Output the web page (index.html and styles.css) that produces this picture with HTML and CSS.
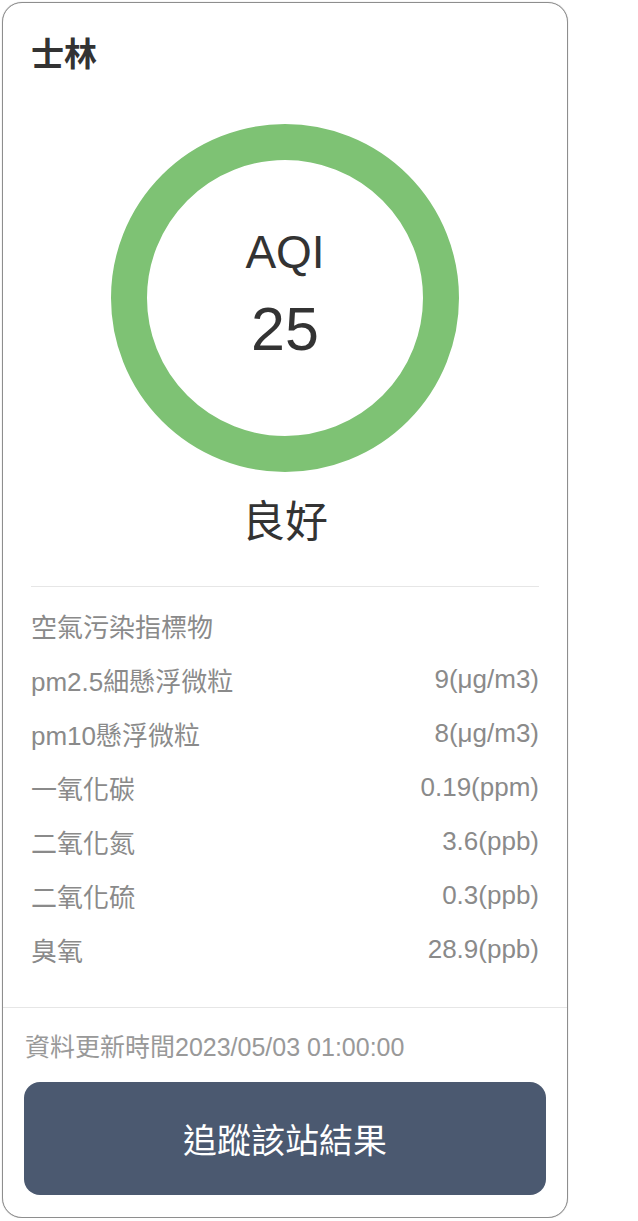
FILE: index.html
```html
<!DOCTYPE html>
<html lang="zh-Hant">
<head>
<meta charset="utf-8">
<title>士林 AQI</title>
<link rel="stylesheet" href="styles.css">
</head>
<body>
<div class="card">
  <div class="header"><h1 class="title">士林</h1></div>
  <div class="ring-wrap">
    <div class="ring">
      <div class="ring-label">AQI</div>
      <div class="ring-value">25</div>
    </div>
  </div>
  <div class="status">良好</div>
  <div class="pollutants">
    <div class="divider"></div>
    <div class="row"><span>空氣污染指標物</span></div>
    <div class="row"><span>pm2.5細懸浮微粒</span><span>9(μg/m3)</span></div>
    <div class="row"><span>pm10懸浮微粒</span><span>8(μg/m3)</span></div>
    <div class="row"><span>一氧化碳</span><span>0.19(ppm)</span></div>
    <div class="row"><span>二氧化氮</span><span>3.6(ppb)</span></div>
    <div class="row"><span>二氧化硫</span><span>0.3(ppb)</span></div>
    <div class="row"><span>臭氧</span><span>28.9(ppb)</span></div>
  </div>
  <div class="footer">
    <div class="updated">資料更新時間2023/05/03 01:00:00</div>
    <button class="track-btn">追蹤該站結果</button>
  </div>
</div>
</body>
</html>
```

FILE: styles.css
```css
html, body {
  margin: 0;
  padding: 0;
  background: #ffffff;
}
body {
  padding: 2px 0 0 2px;
  font-family: "Liberation Sans", "Noto Sans CJK TC", sans-serif;
}
.card {
  width: 566px;
  height: 1216px;
  box-sizing: border-box;
  border: 1px solid #8e8e8e;
  border-radius: 20px;
  box-shadow: 0 0 1px rgba(0, 0, 0, 0.35);
  background: #fff;
  display: flex;
  flex-direction: column;
  overflow: hidden;
}
.header {
  height: 121px;
  padding: 31px 28px 0;
  box-sizing: border-box;
}
.title {
  margin: 0;
  font-size: 33px;
  line-height: 42px;
  font-weight: 700;
  color: #333;
}
.ring-wrap {
  display: flex;
  justify-content: center;
}
.ring {
  width: 348px;
  height: 348px;
  box-sizing: border-box;
  border: 36px solid #7ec274;
  border-radius: 50%;
  display: flex;
  flex-direction: column;
  align-items: center;
  justify-content: center;
  color: #333;
}
.ring-label {
  font-size: 46px;
  line-height: 56px;
  margin-top: -8px;
}
.ring-value {
  font-size: 61px;
  line-height: 70px;
  margin-top: 14px;
}
.status {
  margin-top: 20px;
  height: 60px;
  line-height: 60px;
  text-align: center;
  font-size: 43px;
  color: #333;
}
.pollutants {
  padding: 34px 28px 29px;
}
.divider {
  height: 1px;
  background: #e6e6e6;
  margin-bottom: 11px;
}
.row {
  height: 54px;
  display: flex;
  justify-content: space-between;
  align-items: center;
  font-size: 26px;
  color: #8a8a8a;
}
.row:last-child {
  margin-bottom: 2px;
}
.footer {
  border-top: 1px solid #e6e6e6;
  padding: 22px 21px 0;
  display: flex;
  flex-direction: column;
}
.updated {
  font-size: 25px;
  line-height: 34px;
  color: #999;
  padding-left: 1px;
}
.track-btn {
  margin-top: 18px;
  height: 113px;
  border: none;
  border-radius: 16px;
  background: #4b5970;
  color: #fff;
  font-family: "Liberation Sans", "Noto Sans CJK TC", sans-serif;
  font-size: 34px;
}
```
